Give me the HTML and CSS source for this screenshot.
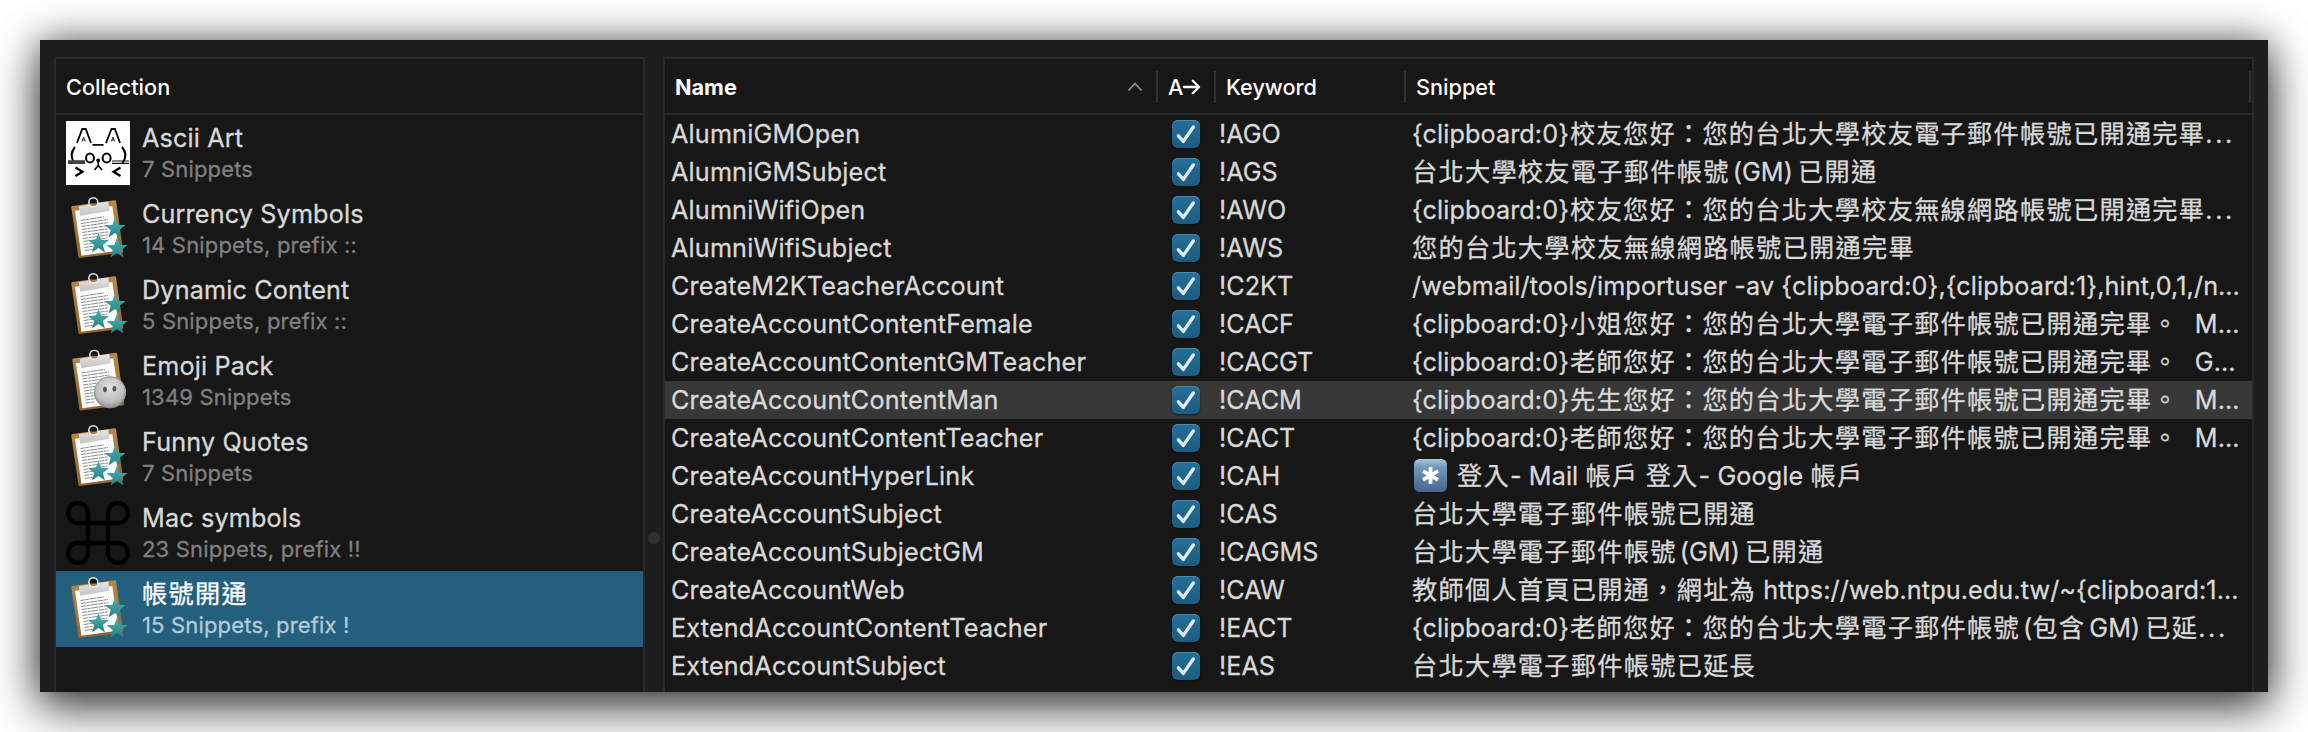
FILE: index.html
```html
<!DOCTYPE html>
<html lang="zh-Hant">
<head>
<meta charset="utf-8">
<title>Snippets</title>
<link rel="stylesheet" href="styles.css">
</head>
<body>
<svg class="defs" width="0" height="0">
  <defs>
    <linearGradient id="star" x1="0" y1="0" x2="0" y2="1"><stop offset="0" stop-color="#45b5b6"/><stop offset="1" stop-color="#2b8083"/></linearGradient>
    <linearGradient id="wood" x1="0" y1="0" x2="0" y2="1"><stop offset="0" stop-color="#b98a4b"/><stop offset="1" stop-color="#8f6531"/></linearGradient>
    <linearGradient id="metal" x1="0" y1="0" x2="0" y2="1"><stop offset="0" stop-color="#e6e6e6"/><stop offset="1" stop-color="#c2c2c2"/></linearGradient>
    <radialGradient id="ball" cx=".5" cy=".35" r=".65"><stop offset="0" stop-color="#e2e2e2"/><stop offset=".7" stop-color="#bdbdbd"/><stop offset="1" stop-color="#8d8d8d"/></radialGradient>
    <linearGradient id="key" x1="0" y1="0" x2="0" y2="1"><stop offset="0" stop-color="#a9c6de"/><stop offset=".25" stop-color="#7197bd"/><stop offset="1" stop-color="#48658a"/></linearGradient>
    <path id="star-shape" fill="url(#star)" d="M0-11 2.700-3.600 10.600-3.400 4.300 1.400 6.500 9 0 4.600-6.500 9-4.300 1.400-10.600-3.400-2.700-3.600z"/>
    <symbol id="board" viewBox="0 0 64 64">
      <path fill="url(#wood)" d="M6.300 9 48.700 3.200Q49.800 3 50 4.100L57.200 54.400Q57.400 55.600 56.300 55.800L13.700 61Q12.600 61.100 12.400 60L5.300 10.300Q5.200 9.200 6.300 9z"/>
      <path fill="#fcfcfc" d="M9 13.800 46.300 9 53 53.400 15.400 58.800z"/>
      <path stroke="#8c8c8c" stroke-width="1" stroke-dasharray="5 .6 3 .7 7 .6" fill="none" d="M14.500 23.500 38 19.800M15 26.500l27-4M15.400 29.500l27-4M15.800 32.500l27-4M16.200 35.500l26-3.700M16.600 38.500l26-3.700M17 41.500l26-3.700M17.400 44.500l24-3.500M17.800 47.500l22-3.200M18.200 50.500l17-2.400M18.600 53.500l9-1.300"/>
      <path fill="url(#metal)" d="M12.700 9.200 22.500 7.500 32 6.100 42.200 4.600 43.600 13.700 14.200 18.800z"/>
      <circle cx="27.300" cy="5.300" r="4.200" fill="#181818"/>
      <path fill="#a87a3e" d="M23.500 6.500h7.600a4 4 0 0 1-7.600 0z"/>
      <circle cx="27.300" cy="5.300" r="4.500" fill="none" stroke="#e9e9e9" stroke-width="1.500"/>
    </symbol>
    <symbol id="clip" viewBox="0 0 64 64">
      <use href="#board" width="64" height="64"/>
      <use href="#star-shape" x="49" y="31.500"/>
      <use href="#star-shape" x="32.500" y="46.500"/>
      <use href="#star-shape" x="51" y="51.500"/>
    </symbol>
    <symbol id="emoji" viewBox="0 0 64 64">
      <use href="#board" x="1" y=".5" width="64" height="64"/>
      <circle cx="44" cy="43.300" r="16" fill="url(#ball)"/>
      <circle cx="44" cy="43.300" r="15.500" fill="none" stroke="#8a8a8a" stroke-width=".8"/>
      <ellipse cx="39" cy="40.500" rx="1.900" ry="2.800" fill="#555"/>
      <ellipse cx="48.400" cy="39.700" rx="1.900" ry="2.800" fill="#555"/>
    </symbol>
    <symbol id="cat" viewBox="0 0 64 64">
      <path fill="#fff" d="M0 0h64v64H0z"/>
      <path fill="none" stroke="#000" stroke-width="1.800" d="M11 22 16.200 8h3.600L25 22M40 22 45.500 8h3.400L54 22M26.500 23.800h11"/>
      <path fill="none" stroke="#333" stroke-width="1" d="M16 20.500 17.600 16l1.700 4.500M16.500 19h2.500M45.500 20.500 47 16l1.700 4.500M46 19h2.500"/>
      <path fill="none" stroke="#000" stroke-width="2" d="M9 26Q2.500 34 8.500 42M56 26Q62.500 34 56.500 42"/>
      <path fill="#444" d="M2 39.200h17V43H2z"/>
      <path fill="none" stroke="#111" stroke-width="1.200" d="M46 40h17M46 42.400h17"/>
      <g fill="none" stroke="#000" stroke-width="2"><ellipse cx="24" cy="37" rx="4" ry="4.500"/><ellipse cx="40.600" cy="37" rx="4" ry="4.500"/></g>
      <circle cx="32.200" cy="39.500" r="1.900"/>
      <path fill="none" stroke="#000" stroke-width="1.600" d="M32.200 40v4.500l-3.700 4.500M32.200 44.500 36 49"/>
      <path fill="none" stroke="#000" stroke-width="2.200" d="M9.500 46.500 16.500 50.700 9.500 55M54.500 46.500 47.500 50.700 54.500 55"/>
    </symbol>
    <symbol id="cmd" viewBox="0 0 64 64">
      <path fill="none" stroke="#000" stroke-width="4.300" d="M22 22H12.200A10 10 0 1 1 22 12.200V51.800A10 10 0 1 1 12.200 42H51.800A10 10 0 1 1 42 51.800V12.200A10 10 0 1 1 51.800 22z"/>
    </symbol>
    <symbol id="check" viewBox="0 0 28 28"><path fill="none" stroke="#e1ecf2" stroke-width="3.400" stroke-linecap="round" stroke-linejoin="round" d="M6.400 15.800 11.300 21.400 21.300 7"/></symbol>
  </defs>
</svg>

<div class="window">
  <section class="panel collections">
    <header class="head"><span class="th">Collection</span></header>
    <div class="item"><svg class="icon"><use href="#cat"/></svg><div><div class="title">Ascii Art</div><div class="sub">7 Snippets</div></div></div>
    <div class="item"><svg class="icon"><use href="#clip"/></svg><div><div class="title">Currency Symbols</div><div class="sub">14 Snippets, prefix ::</div></div></div>
    <div class="item"><svg class="icon"><use href="#clip"/></svg><div><div class="title">Dynamic Content</div><div class="sub">5 Snippets, prefix ::</div></div></div>
    <div class="item"><svg class="icon"><use href="#emoji"/></svg><div><div class="title">Emoji Pack</div><div class="sub">1349 Snippets</div></div></div>
    <div class="item"><svg class="icon"><use href="#clip"/></svg><div><div class="title">Funny Quotes</div><div class="sub">7 Snippets</div></div></div>
    <div class="item"><svg class="icon"><use href="#cmd"/></svg><div><div class="title">Mac symbols</div><div class="sub">23 Snippets, prefix !!</div></div></div>
    <div class="item selected"><svg class="icon"><use href="#clip"/></svg><div><div class="title"><b>帳號開通</b></div><div class="sub">15 Snippets, prefix !</div></div></div>
  </section>
  <div class="splitter"><i class="grip"></i></div>
  <section class="panel snippets">
    <header class="head cols">
      <div class="cell sorted"><span class="th">Name</span><svg class="sort" viewBox="0 0 16 10"><path d="M1.500 8.500 8 1.500 14.500 8.500"/></svg></div>
      <div class="cell"><span class="th">A</span><svg class="arrow" viewBox="0 0 18 16"><path d="M1 8H16M9.800 1.800 16 8 9.800 14.200"/></svg></div>
      <div class="cell"><span class="th">Keyword</span></div>
      <div class="cell"><span class="th">Snippet</span></div>
    </header>
    <div class="row cols"><span class="name">AlumniGMOpen</span><svg class="box"><use href="#check"/></svg><span class="kw">!AGO</span><span class="text">{clipboard:0}<b class="after">校友您好：您的台北大學校友電子郵件帳號已開通完畢</b><i class="dots">...</i></span></div>
    <div class="row cols"><span class="name">AlumniGMSubject</span><svg class="box"><use href="#check"/></svg><span class="kw">!AGS</span><span class="text"><b>台北大學校友電子郵件帳號</b><i class="latin">(GM)</i><b>已開通</b></span></div>
    <div class="row cols"><span class="name">AlumniWifiOpen</span><svg class="box"><use href="#check"/></svg><span class="kw">!AWO</span><span class="text">{clipboard:0}<b class="after">校友您好：您的台北大學校友無線網路帳號已開通完畢</b><i class="dots">...</i></span></div>
    <div class="row cols"><span class="name">AlumniWifiSubject</span><svg class="box"><use href="#check"/></svg><span class="kw">!AWS</span><span class="text"><b>您的台北大學校友無線網路帳號已開通完畢</b></span></div>
    <div class="row cols"><span class="name">CreateM2KTeacherAccount</span><svg class="box"><use href="#check"/></svg><span class="kw">!C2KT</span><span class="text">/webmail/tools/importuser -av {clipboard:0},{clipboard:1},hint,0,1,/n…</span></div>
    <div class="row cols"><span class="name">CreateAccountContentFemale</span><svg class="box"><use href="#check"/></svg><span class="kw">!CACF</span><span class="text">{clipboard:0}<b class="after">小姐您好：您的台北大學電子郵件帳號已開通完畢。</b><i class="tail">M…</i></span></div>
    <div class="row cols"><span class="name">CreateAccountContentGMTeacher</span><svg class="box"><use href="#check"/></svg><span class="kw">!CACGT</span><span class="text">{clipboard:0}<b class="after">老師您好：您的台北大學電子郵件帳號已開通完畢。</b><i class="tail">G…</i></span></div>
    <div class="row cols hover"><span class="name">CreateAccountContentMan</span><svg class="box"><use href="#check"/></svg><span class="kw">!CACM</span><span class="text">{clipboard:0}<b class="after">先生您好：您的台北大學電子郵件帳號已開通完畢。</b><i class="tail">M…</i></span></div>
    <div class="row cols"><span class="name">CreateAccountContentTeacher</span><svg class="box"><use href="#check"/></svg><span class="kw">!CACT</span><span class="text">{clipboard:0}<b class="after">老師您好：您的台北大學電子郵件帳號已開通完畢。</b><i class="tail">M…</i></span></div>
    <div class="row cols"><span class="name">CreateAccountHyperLink</span><svg class="box"><use href="#check"/></svg><span class="kw">!CAH</span><span class="text"><svg class="keycap" viewBox="0 0 33 33"><rect width="33" height="33" rx="5.500" fill="url(#key)"/><path stroke="#fff" stroke-width="3.800" d="M16.500 8v17M9 12.200l15 8.600M24 12.200 9 20.800"/></svg><b>登入</b>- Mail <b>帳戶</b> <b>登入</b>- Google <b>帳戶</b></span></div>
    <div class="row cols"><span class="name">CreateAccountSubject</span><svg class="box"><use href="#check"/></svg><span class="kw">!CAS</span><span class="text"><b>台北大學電子郵件帳號已開通</b></span></div>
    <div class="row cols"><span class="name">CreateAccountSubjectGM</span><svg class="box"><use href="#check"/></svg><span class="kw">!CAGMS</span><span class="text"><b>台北大學電子郵件帳號</b><i class="latin">(GM)</i><b>已開通</b></span></div>
    <div class="row cols"><span class="name">CreateAccountWeb</span><svg class="box"><use href="#check"/></svg><span class="kw">!CAW</span><span class="text"><b>教師個人首頁已開通，網址為</b> https://web.ntpu.edu.tw/~{clipboard:1…</span></div>
    <div class="row cols"><span class="name">ExtendAccountContentTeacher</span><svg class="box"><use href="#check"/></svg><span class="kw">!EACT</span><span class="text">{clipboard:0}<b class="after">老師您好：您的台北大學電子郵件帳號</b><i class="latin">(<b>包含</b><i class="gap">GM)</i></i><b>已延</b><i class="dots">...</i></span></div>
    <div class="row cols"><span class="name">ExtendAccountSubject</span><svg class="box"><use href="#check"/></svg><span class="kw">!EAS</span><span class="text"><b>台北大學電子郵件帳號已延長</b></span></div>
  </section>
</div>
</body>
</html>
```
FILE: styles.css
```css
* { box-sizing: border-box; }

body {
  margin: 0;
  width: 2308px;
  height: 732px;
  padding: 40px;
  overflow: hidden;
  background: #fff;
  color: #d8d8d8;
  font-family: Inter, "Noto Sans CJK TC", sans-serif;
  font-size: 25.2px;
  -webkit-text-stroke: .3px currentColor;
}

.defs { position: absolute; }
b, i { font-weight: inherit; font-style: normal; }
b { letter-spacing: 1.28px; }

.window {
  display: flex;
  height: 652px;
  padding: 17px 14px 0;
  background: #1d1d1d;
  box-shadow: 0 18px 44px rgba(0, 0, 0, .62), 0 0 34px rgba(0, 0, 0, .5);
}

.panel {
  border: 2px solid #292929;
  border-bottom: 0;
  background: #171717;
}
.collections { width: 591px; }
.snippets { width: 1591px; }

.splitter {
  display: flex;
  width: 18px;
  align-items: center;
  justify-content: center;
}
.grip {
  width: 12px;
  height: 12px;
  margin-top: 327px;
  border-radius: 50%;
  background: #303132;
}

.head {
  height: 56px;
  border-bottom: 2px solid #292929;
  color: #fbfbfb;
  font-size: 21.7px;
  font-weight: 500;
  line-height: 56px;
  -webkit-text-stroke: 0;
}
.collections .head { padding-left: 10px; }

.item {
  display: flex;
  gap: 12px;
  height: 76px;
  padding: 6px 10px;
}
.icon { width: 64px; height: 64px; flex: none; }
.title { height: 33px; line-height: 34px; letter-spacing: .15px; }
.sub { color: #808080; font-size: 22px; line-height: 30px; letter-spacing: .17px; }
.selected { background: #245f7d; color: #fff; }
.selected .sub { color: #b3cbd7; }

.cols {
  display: grid;
  grid-template-columns: 493px 58px 190px 1fr;
}
.cell {
  display: flex;
  align-items: center;
  height: 32px;
  margin-top: 12px;
  padding-left: 10px;
  border-right: 2px solid #303030;
}
.cell:last-child { margin-right: 1px; }
.sorted { justify-content: space-between; padding-right: 13px; font-weight: 700; }
.sort { width: 16px; height: 10px; fill: none; stroke: #8d8d8d; stroke-width: 1.8; }
.arrow { width: 18px; height: 16px; fill: none; stroke: #fbfbfb; stroke-width: 2.3; stroke-linecap: round; stroke-linejoin: round; }

.row { height: 38px; line-height: 38px; white-space: nowrap; }
.row > * { min-width: 0; }
.hover { background: #373737; }
.name { padding-left: 6px; letter-spacing: .17px; }
.box {
  width: 28px;
  height: 28px;
  margin: 5px 0 0 14px;
  border-radius: 6px;
  background: linear-gradient(#236f99, #1c5b80);
  box-shadow: inset 0 1px 0 #4a89ab, 0 1px 2px rgba(0, 0, 0, .5);
}
.kw { padding-left: 3px; }
.text { padding-left: 6px; letter-spacing: .1px; }
.after { margin-left: 1px; }
.latin { margin: 0 5px 0 3px; }
.gap { margin-left: 4px; }
.dots { letter-spacing: 2.6px; }
.tail { margin-left: 16px; }
.keycap { width: 33px; height: 33px; margin: 0 10px 0 2px; vertical-align: -7px; }
```
